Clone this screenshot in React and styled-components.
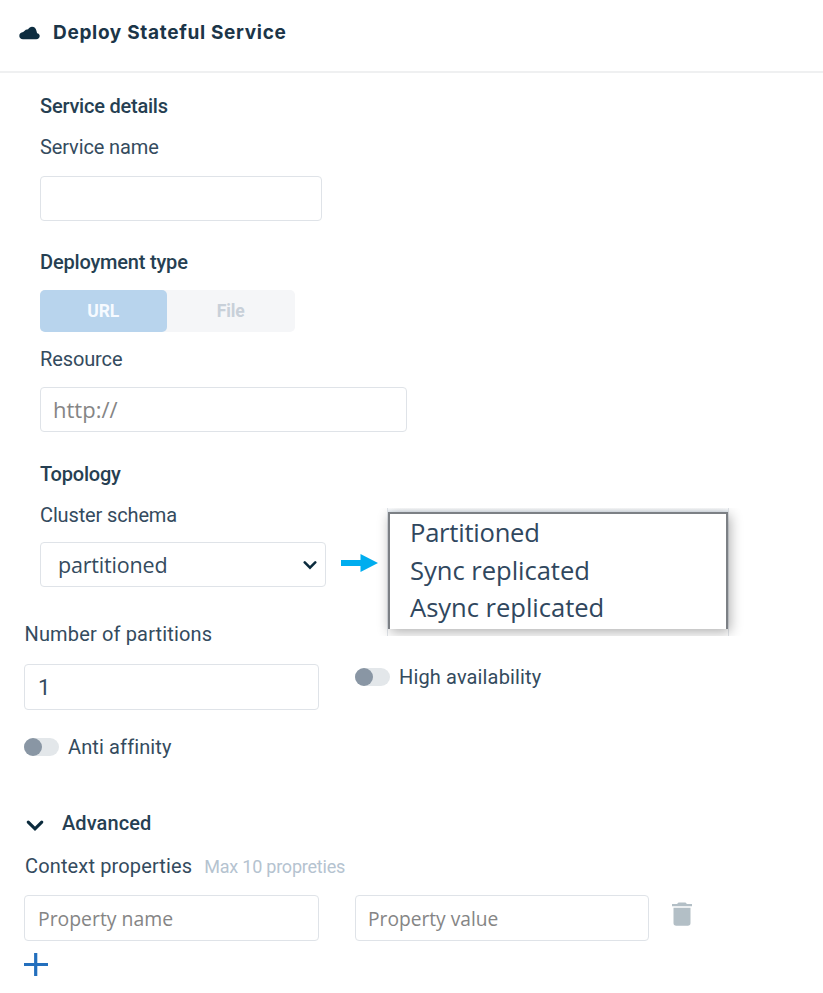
import React from 'react';
import styled, { createGlobalStyle } from 'styled-components';

const Global = createGlobalStyle`
  *, *::before, *::after { box-sizing: border-box; }
  body { margin: 0; background: #fff; font-family: Roboto, "Liberation Sans", sans-serif; }
`;

const Page = styled.main`
  width: 823px;
  height: 993px;
  overflow: hidden;
  background: #fff;
  color: #344b5e;
`;

const Header = styled.header`
  display: flex;
  align-items: center;
  gap: 13px;
  height: 73px;
  padding: 0 19px 6px;
  border-bottom: 2px solid #eff0f1;
`;

const Title = styled.h1`
  margin: 0;
  font: 700 19px/24px Inter, sans-serif;
  letter-spacing: 0.68px;
  color: #1b3548;
`;

const Section = styled.section`
  display: flex;
  flex-direction: column;
  align-items: flex-start;
  margin-top: ${(p) => p.$top}px;
  padding-left: ${(p) => p.$left}px;
`;

const Heading = styled.h2`
  margin: 0;
  font-size: 20px;
  font-weight: 500;
  line-height: 24px;
  letter-spacing: ${(p) => p.$tracking ?? -0.22}px;
  color: #263f52;
  white-space: nowrap;
`;

const Label = styled.label`
  display: block;
  margin: ${(p) => p.$top ?? 0}px 0 0 ${(p) => p.$left ?? 0}px;
  font-size: 20px;
  line-height: 24px;
  letter-spacing: ${(p) => p.$tracking ?? -0.12}px;
  white-space: nowrap;
`;

const Input = styled.input`
  display: block;
  width: ${(p) => p.$width}px;
  height: ${(p) => p.$height ?? 45}px;
  margin: ${(p) => p.$top ?? 0}px 0 0;
  padding: 0 12px ${(p) => p.$lift ?? 0}px ${(p) => p.$inset ?? 12}px;
  border: 1px solid #dfe3e8;
  border-radius: 4px;
  outline: 0;
  background: #fff;
  color: #344b5e;
  font-family: ${(p) => (p.$plain ? 'Roboto' : '"Open Sans"')}, sans-serif;
  font-size: ${(p) => p.$size ?? 22}px;
  &::placeholder { color: #858585; opacity: 1; }
`;

const Segmented = styled.div`
  display: flex;
  width: 255px;
  height: 42px;
  margin: 16px 0 0 -0.5px;
  border-radius: 5px;
  background: #f5f6f8;
`;

const Segment = styled.button`
  flex: 1;
  padding: 0;
  border: 0;
  border-radius: 5px;
  background: ${(p) => (p.$active ? '#b8d4ed' : 'transparent')};
  color: ${(p) => (p.$active ? '#f6faff' : '#c8d0d9')};
  font: 700 17.5px/42px Roboto, sans-serif;
  letter-spacing: -0.1px;
`;

const SchemaRow = styled.div`
  display: flex;
  align-items: flex-start;
  height: 84px;
  margin-top: 17px;
`;

const SelectBox = styled.div`
  display: flex;
  align-items: center;
  justify-content: space-between;
  width: 286px;
  height: 45px;
  margin-top: 15px;
  padding: 0 8px 0 17px;
  border: 1px solid #dfe3e8;
  border-radius: 4px;
  font: 400 21.5px/44px "Open Sans", sans-serif;
  letter-spacing: -0.18px;
`;

const Arrow = styled.svg`
  flex: none;
  margin: 50px 0 0 15px;
`;

const MenuFrame = styled.div`
  flex: none;
  width: 370px;
  height: 128px;
  margin: 5px 0 0 -3px;
  padding: 0 16px 0 12px;
  overflow: hidden;
`;

const MenuOwner = styled.div`
  width: 342px;
  height: 128px;
  padding: 4px 1px 0;
  border: 1px solid #e1e5ea;
  border-width: 0 1px;
  background: linear-gradient(#fff, #e4ebf2 4px, #fff 5px);
`;

const Menu = styled.ul`
  width: 340px;
  height: 117px;
  margin: 0 0 0 -1px;
  padding: 1px 0 0 20px;
  list-style: none;
  border: solid #7c8085;
  border-width: 2px 2px 0;
  background: #fff;
  box-shadow: 2px 3px 12px rgba(0, 0, 0, 0.32);
`;

const Option = styled.li`
  height: 37.5px;
  font: 400 25.6px/36px "Open Sans", sans-serif;
  letter-spacing: ${(p) => p.$tracking ?? -0.04}px;
  color: #30475e;
  white-space: nowrap;
`;

const Columns = styled.div`
  display: flex;
  align-items: center;
  gap: 36px;
  margin-top: ${(p) => p.$top}px;
`;

const ToggleRow = styled.div`
  display: flex;
  align-items: center;
  gap: 9px;
  height: 24px;
  margin: ${(p) => p.$margin ?? '0'};
`;

const Toggle = styled.span`
  width: 35px;
  height: 18px;
  border-radius: 9px;
  background: #e3e7ea;
  &::before {
    content: '';
    display: block;
    width: 18px;
    height: 18px;
    border-radius: 50%;
    background: #8996a4;
  }
`;

const AdvancedRow = styled.div`
  display: flex;
  align-items: center;
  gap: 18px;
  margin: 52px 0 0 2px;
  > svg { margin-top: 5px; }
`;

const CaptionRow = styled.div`
  display: flex;
  align-items: baseline;
  gap: 12px;
  height: 24px;
  margin: 19px 0 0 1px;
`;

const Hint = styled.span`
  font-size: 18px;
  line-height: 26px;
  letter-spacing: -0.22px;
  color: #b5c3d0;
`;

const IconButton = styled.button`
  display: block;
  padding: 0;
  border: 0;
  background: none;
  margin: ${(p) => p.$margin};
  line-height: 0;
`;

const CloudIcon = () => (
  <svg width="21" height="14" viewBox="0 0 21 14" fill="#0d2d40">
    <path d="M4 13.200C1.800 13.200.3 11.800.3 9.900c0-2.100 1.500-3.500 3.900-3.800L6.800 3.800l2.300-.5C10 1.500 11.500.7 13 .7c2.300 0 4 1.500 4.500 4.200l.6 2.300c1.600.3 2.600 1.300 2.600 2.900 0 1.900-1.400 3.100-3.500 3.100z" />
  </svg>
);

const Chevron = ({ width, height, stroke }) => (
  <svg width={width} height={height} viewBox="0 0 16 11" fill="none" stroke="#0b2b3d" strokeWidth={stroke} strokeLinecap="round">
    <path d="M2 2.500L8 8.500L14 2.500" />
  </svg>
);

export default function App() {
  return (
    <Page>
      <Global />
      <Header>
        <CloudIcon />
        <Title>Deploy Stateful Service</Title>
      </Header>

      <Section $top={21} $left={40}>
        <Heading>Service details</Heading>
        <Label $top={17}>Service name</Label>
        <Input $top={17} $width={282} aria-label="Service name" />
      </Section>

      <Section $top={29} $left={40}>
        <Heading $tracking={-0.18}>Deployment type</Heading>
        <Segmented>
          <Segment $active>URL</Segment>
          <Segment>File</Segment>
        </Segmented>
        <Label $top={15}>Resource</Label>
        <Input $top={16} $width={367} $lift={2} placeholder="http://" />
      </Section>

      <Section $top={30} $left={40}>
        <Heading>Topology</Heading>
        <SchemaRow>
          <div>
            <Label $tracking={-0.14}>Cluster schema</Label>
            <SelectBox>
              partitioned
              <Chevron width={14} height={10} stroke={2.9} />
            </SelectBox>
          </div>
          <Arrow width="37" height="20" viewBox="0 0 37 20" fill="#00adef">
            <path d="M0 7H19.500V1L37 10L19.500 19V13H0z" />
          </Arrow>
          <MenuFrame>
            <MenuOwner>
              <Menu>
                <Option $tracking={-0.25}>Partitioned</Option>
                <Option>Sync replicated</Option>
                <Option>Async replicated</Option>
              </Menu>
            </MenuOwner>
          </MenuFrame>
        </SchemaRow>
      </Section>

      <Section $top={35} $left={24}>
        <Columns $top={0}>
          <div>
            <Label $left={0.5} $tracking={0.15}>Number of partitions</Label>
            <Input $top={18} $width={295} $height={46} $inset={13} $plain defaultValue="1" />
          </div>
          <ToggleRow $margin="22px 0 0">
            <Toggle />
            <Label $tracking={0.14}>High availability</Label>
          </ToggleRow>
        </Columns>
        <ToggleRow $margin="25px 0 0">
          <Toggle />
          <Label $tracking={0.12}>Anti affinity</Label>
        </ToggleRow>

        <AdvancedRow>
          <Chevron width={18} height={13} stroke={2.8} />
          <Heading $tracking={0.1}>Advanced</Heading>
        </AdvancedRow>
        <CaptionRow>
          <Label $tracking={0.14}>Context properties</Label>
          <Hint>Max 10 propreties</Hint>
        </CaptionRow>
        <Columns $top={17}>
          <Input $width={295} $height={46} $size={19.4} $inset={13} placeholder="Property name" />
          <Input $width={294} $height={46} $size={19.2} placeholder="Property value" />
          <IconButton $margin="-8px 0 0 -13px" aria-label="Remove property">
            <svg width="20" height="24" viewBox="0 0 20 24" fill="#b3bfc6">
              <path d="M0 2H5L6.500.5H13.500L15 2H20V4.300H0zM1.500 5.800H18.500V21Q18.500 23.700 15.800 23.700H4.200Q1.500 23.700 1.500 21z" />
            </svg>
          </IconButton>
        </Columns>
        <IconButton $margin="12px 0 0" aria-label="Add property">
          <svg width="24" height="23" viewBox="0 0 24 23" stroke="#236fbd" strokeWidth="3.200">
            <path d="M0 11.500H24M11.700 0V23" />
          </svg>
        </IconButton>
      </Section>
    </Page>
  );
}
